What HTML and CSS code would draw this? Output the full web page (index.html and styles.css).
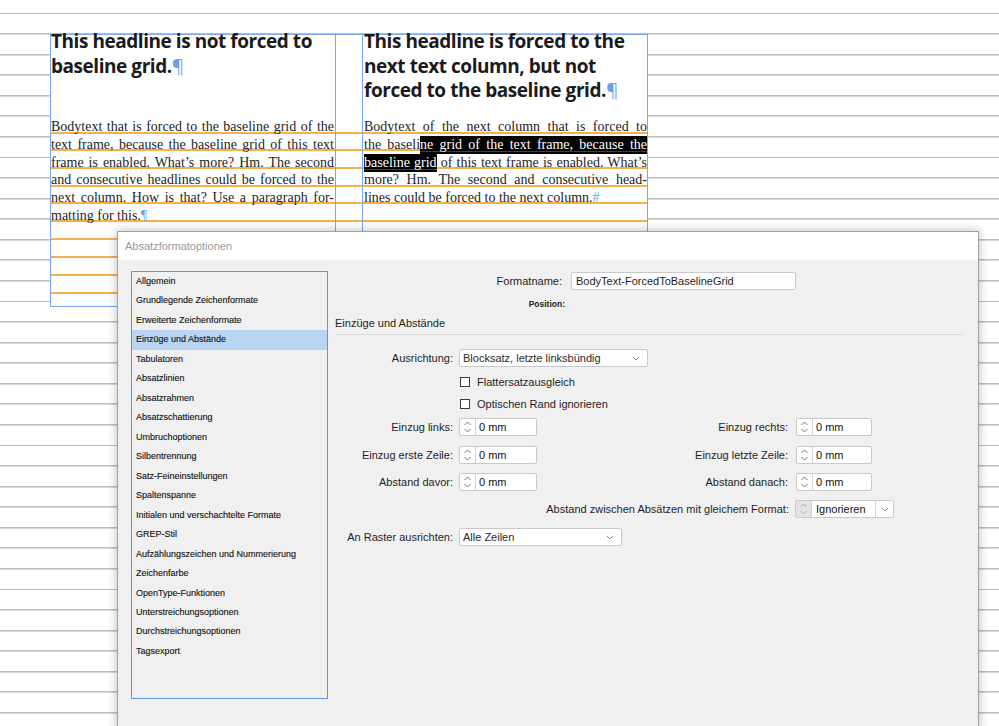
FILE: index.html
```html
<!DOCTYPE html>
<html lang="de">
<head>
<meta charset="utf-8">
<title>Absatzformatoptionen</title>
<link rel="stylesheet" href="styles.css">
</head>
<body>
<div class="page">
  <div class="frame">
    <div class="col col-l">
      <div class="hl">This headline is not forced to<br>baseline grid.<span class="pil">¶</span></div>
      <div class="body">
        <span class="ln">Bodytext that is forced to the baseline grid of the</span>
        <span class="ln">text frame, because the baseline grid of this text</span>
        <span class="ln">frame is enabled. What’s more? Hm. The second</span>
        <span class="ln">and consecutive headlines could be forced to the</span>
        <span class="ln">next column. How is that? Use a paragraph for-</span>
        <span class="ln last">matting for this.<span class="pil">¶</span></span>
      </div>
    </div>
    <div class="gutter"></div>
    <div class="col col-r">
      <div class="hl">This headline is forced to the<br>next text column, but not<br>forced to the baseline grid.<span class="pil">¶</span></div>
      <div class="body">
        <span class="ln">Bodytext of the next column that is forced to</span>
        <span class="ln">the baseli<span class="hi">ne grid of the text frame, because the</span></span>
        <span class="ln"><span class="hi">baseline grid</span> of this text frame is enabled. What’s</span>
        <span class="ln">more? Hm. The second and consecutive head-</span>
        <span class="ln last">lines could be forced to the next column.<span class="pil">#</span></span>
      </div>
    </div>
  </div>

  <div class="dialog">
    <div class="titlebar">Absatzformatoptionen</div>
    <div class="dbody">
      <ul class="list">
        <li>Allgemein</li>
        <li>Grundlegende Zeichenformate</li>
        <li>Erweiterte Zeichenformate</li>
        <li class="sel">Einzüge und Abstände</li>
        <li>Tabulatoren</li>
        <li>Absatzlinien</li>
        <li>Absatzrahmen</li>
        <li>Absatzschattierung</li>
        <li>Umbruchoptionen</li>
        <li>Silbentrennung</li>
        <li>Satz-Feineinstellungen</li>
        <li>Spaltenspanne</li>
        <li>Initialen und verschachtelte Formate</li>
        <li>GREP-Stil</li>
        <li>Aufzählungszeichen und Nummerierung</li>
        <li>Zeichenfarbe</li>
        <li>OpenType-Funktionen</li>
        <li>Unterstreichungsoptionen</li>
        <li>Durchstreichungsoptionen</li>
        <li>Tagsexport</li>
      </ul>

      <div class="panel">
        <div class="row r-fmt">
          <span class="lab lab-fmt">Formatname:</span>
          <span class="input">BodyText-ForcedToBaselineGrid</span>
        </div>
        <div class="row r-pos"><span class="lab lab-pos">Position:</span></div>
        <div class="hdr">Einzüge und Abstände</div>
        <div class="sep"></div>

        <div class="row r-ausr">
          <span class="lab lab-l">Ausrichtung:</span>
          <span class="select sel-ausr"><span>Blocksatz, letzte linksbündig</span>
            <svg width="8" height="5" viewBox="0 0 8 5"><polyline points="1,1 4,4 7,1" fill="none" stroke="#8c8c8c" stroke-width="1"/></svg></span>
        </div>
        <div class="row r-cb1"><span class="cb"></span><span>Flattersatzausgleich</span></div>
        <div class="row r-cb2"><span class="cb"></span><span>Optischen Rand ignorieren</span></div>

        <div class="row r-n1">
          <span class="lab lab-l">Einzug links:</span>
          <span class="spin spin-l"><span class="arrows"><svg width="15" height="16" viewBox="0 0 15 16"><polyline points="4.5,6 7.5,3 10.5,6" fill="none" stroke="#7a7a7a"/><polyline points="4.5,10 7.5,13 10.5,10" fill="none" stroke="#7a7a7a"/></svg></span><span class="val">0 mm</span></span>
          <span class="lab lab-r">Einzug rechts:</span>
          <span class="spin spin-r"><span class="arrows"><svg width="15" height="16" viewBox="0 0 15 16"><polyline points="4.5,6 7.5,3 10.5,6" fill="none" stroke="#7a7a7a"/><polyline points="4.5,10 7.5,13 10.5,10" fill="none" stroke="#7a7a7a"/></svg></span><span class="val">0 mm</span></span>
        </div>
        <div class="row r-n2">
          <span class="lab lab-l">Einzug erste Zeile:</span>
          <span class="spin spin-l"><span class="arrows"><svg width="15" height="16" viewBox="0 0 15 16"><polyline points="4.5,6 7.5,3 10.5,6" fill="none" stroke="#7a7a7a"/><polyline points="4.5,10 7.5,13 10.5,10" fill="none" stroke="#7a7a7a"/></svg></span><span class="val">0 mm</span></span>
          <span class="lab lab-r">Einzug letzte Zeile:</span>
          <span class="spin spin-r"><span class="arrows"><svg width="15" height="16" viewBox="0 0 15 16"><polyline points="4.5,6 7.5,3 10.5,6" fill="none" stroke="#7a7a7a"/><polyline points="4.5,10 7.5,13 10.5,10" fill="none" stroke="#7a7a7a"/></svg></span><span class="val">0 mm</span></span>
        </div>
        <div class="row r-n3">
          <span class="lab lab-l">Abstand davor:</span>
          <span class="spin spin-l"><span class="arrows"><svg width="15" height="16" viewBox="0 0 15 16"><polyline points="4.5,6 7.5,3 10.5,6" fill="none" stroke="#7a7a7a"/><polyline points="4.5,10 7.5,13 10.5,10" fill="none" stroke="#7a7a7a"/></svg></span><span class="val">0 mm</span></span>
          <span class="lab lab-r">Abstand danach:</span>
          <span class="spin spin-r"><span class="arrows"><svg width="15" height="16" viewBox="0 0 15 16"><polyline points="4.5,6 7.5,3 10.5,6" fill="none" stroke="#7a7a7a"/><polyline points="4.5,10 7.5,13 10.5,10" fill="none" stroke="#7a7a7a"/></svg></span><span class="val">0 mm</span></span>
        </div>

        <div class="row r-abz">
          <span class="lab lab-abz">Abstand zwischen Absätzen mit gleichem Format:</span>
          <span class="combo">
            <span class="arrows dis"><svg width="15" height="16" viewBox="0 0 15 16"><polyline points="4.5,6 7.5,3 10.5,6" fill="none" stroke="#b4b4b4"/><polyline points="4.5,10 7.5,13 10.5,10" fill="none" stroke="#b4b4b4"/></svg></span>
            <span class="cval">Ignorieren</span>
            <span class="drop"><svg width="8" height="5" viewBox="0 0 8 5"><polyline points="1,1 4,4 7,1" fill="none" stroke="#8c8c8c" stroke-width="1"/></svg></span>
          </span>
        </div>

        <div class="row r-ras">
          <span class="lab lab-l">An Raster ausrichten:</span>
          <span class="select sel-ras"><span>Alle Zeilen</span>
            <svg width="8" height="5" viewBox="0 0 8 5"><polyline points="1,1 4,4 7,1" fill="none" stroke="#8c8c8c" stroke-width="1"/></svg></span>
        </div>
      </div>
    </div>
  </div>
</div>
</body>
</html>
```
FILE: styles.css
```css
* { box-sizing: border-box; }
html, body { margin: 0; padding: 0; }

.page {
  position: relative;
  width: 999px;
  height: 726px;
  overflow: hidden;
  padding: 34px 0 0 50px;
  background:
    repeating-linear-gradient(to bottom,
      transparent 0, transparent 12.6px,
      #bdbdbd 12.6px, #bdbdbd 13.6px,
      #dadada 13.6px, #dadada 14.4px,
      transparent 14.4px, transparent 20.57px),
    #fff;
}

/* InDesign text frame with its own baseline grid */
.frame {
  --bl: linear-gradient(#f8ae4c, #f8ae4c);
  width: 598px;
  height: 273px;
  border: 1px solid #7aa7ee;
  display: grid;
  grid-template-columns: 284px 28px 284px;
  background:
    var(--bl) 0 97px / 100% 2px no-repeat,
    var(--bl) 0 114px / 100% 2px no-repeat,
    var(--bl) 0 132px / 100% 2px no-repeat,
    var(--bl) 0 150px / 100% 2px no-repeat,
    var(--bl) 0 167px / 100% 2px no-repeat,
    var(--bl) 0 185px / 100% 2px no-repeat,
    var(--bl) 0 203px / 100% 2px no-repeat,
    var(--bl) 0 221px / 100% 2px no-repeat,
    var(--bl) 0 239px / 100% 2px no-repeat,
    var(--bl) 0 257px / 100% 2px no-repeat,
    #fff;
}
.gutter {
  border-left: 1px solid #7aa7ee;
  border-right: 1px solid #7aa7ee;
}
.col-l { padding-right: 1px; }
.col-r { padding-left: 1px; }

.hl {
  margin-top: -6px;
  height: 88.85px;
  font: 700 19px/24.5px "Open Sans", "Noto Sans", sans-serif;
  letter-spacing: -0.45px;
  color: #1c1a1b;
}
.pil {
  color: #6e9fee;
  font-weight: 400;
  letter-spacing: 0;
}
.body {
  font: 14px/17.85px "Liberation Serif", "Times New Roman", serif;
  color: #221f1f;
}
.ln {
  display: block;
  text-align: justify;
  text-align-last: justify;
}
.ln.last { text-align-last: left; }
.hi {
  color: #fff;
  padding: 1px 0 2px;
  background: linear-gradient(#000 0, #000 14.6px, #1d3f9c 14.6px, #1d3f9c 16px, #000 16px);
}

/* Dialog */
.dialog {
  position: absolute;
  left: 117px;
  top: 231px;
  width: 862px;
  height: 520px;
  background: #f0f0f0;
  border: 1px solid #a3a3a3;
  box-shadow: 0 0 9px rgba(0, 0, 0, 0.28);
  font: 11px "Liberation Sans", Arial, sans-serif;
  color: #1e1e1e;
}
.titlebar {
  height: 28px;
  line-height: 28px;
  background: #fff;
  padding-left: 7px;
  color: #999;
}
.dbody {
  display: flex;
  align-items: flex-start;
  padding: 11px 0 0 13px;
}
.list {
  list-style: none;
  margin: 0;
  padding: 0;
  width: 197px;
  height: 428px;
  border: 1px solid #5e98de;
  flex: none;
}
.list li {
  height: 19.47px;
  padding-left: 4px;
  font: 9px/19.47px "Liberation Sans", Arial, sans-serif;
  color: #111;
  -webkit-text-stroke: 0.12px #111;
  white-space: nowrap;
}
.list li.sel { background: #b9d5f1; }

.panel {
  margin-left: 7px;
  padding-top: 1px;
  flex: 1;
}
.row {
  display: flex;
  align-items: center;
  height: 18px;
}
.lab {
  flex: none;
  text-align: right;
  white-space: nowrap;
}
.lab-fmt { width: 227px; margin-right: 9px; }
.input {
  width: 225px;
  height: 18px;
  line-height: 16px;
  border: 1px solid #c9c9c9;
  border-radius: 2px;
  background: #fff;
  padding-left: 4px;
}
.r-pos { height: 10px; margin-top: 9px; }
.lab-pos { width: 230px; font: 700 8.5px "Liberation Sans", Arial, sans-serif; color: #222; }
.hdr { margin-top: 7px; height: 14px; line-height: 14px; }
.sep { margin-top: 4px; width: 628px; height: 1px; background: #d9d9d9; }

.lab-l { width: 118px; margin-right: 6px; }
.lab-r { width: 251px; margin-right: 8px; }
.lab-abz { width: 454px; margin-right: 6px; }

.r-ausr { margin-top: 14px; }
.r-cb1 { margin-top: 6px; padding-left: 125px; }
.r-cb2 { margin-top: 4px; padding-left: 125px; }
.cb {
  width: 10px;
  height: 10px;
  border: 1px solid #3a3a3a;
  background: #fff;
  margin-right: 7px;
  flex: none;
}
.r-n1 { margin-top: 5px; }
.r-n2 { margin-top: 9.5px; }
.r-n3 { margin-top: 9.5px; }
.r-abz { margin-top: 9px; }
.r-ras { margin-top: 10px; }

.select {
  height: 18px;
  border: 1px solid #c9c9c9;
  border-radius: 2px;
  background: #fff;
  display: flex;
  align-items: center;
  justify-content: space-between;
  padding: 0 7px 0 3px;
  color: #2a2a2a;
  flex: none;
}
.sel-ausr { width: 189px; }
.sel-ras { width: 163px; }

.spin {
  display: flex;
  height: 18px;
  border: 1px solid #c9c9c9;
  border-radius: 2px;
  background: #fff;
  flex: none;
}
.spin-l { width: 78px; }
.spin-r { width: 76px; }
.arrows {
  width: 16px;
  border-right: 1px solid #d2d2d2;
  display: flex;
  align-items: center;
  justify-content: center;
  flex: none;
}
.arrows svg { display: block; }
.val { padding-left: 3px; line-height: 16px; color: #111; }

.combo {
  display: flex;
  width: 99px;
  height: 18px;
  border: 1px solid #c9c9c9;
  border-radius: 2px;
  background: #fff;
  flex: none;
}
.arrows.dis { background: #e3e3e3; border-right-color: #d0d0d0; }
.cval { flex: 1; padding-left: 4px; line-height: 16px; color: #111; }
.drop {
  width: 18px;
  border-left: 1px solid #d2d2d2;
  display: flex;
  align-items: center;
  justify-content: center;
}
```
